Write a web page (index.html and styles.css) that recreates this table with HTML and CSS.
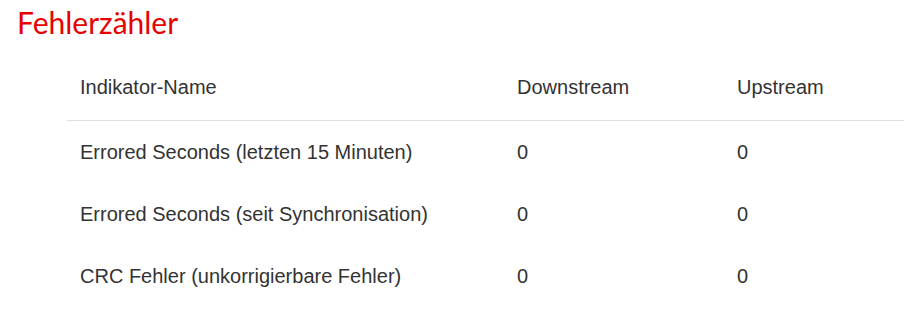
FILE: index.html
```html
<!DOCTYPE html>
<html lang="de">
<head>
<meta charset="utf-8">
<title>Fehlerzähler</title>
<link rel="stylesheet" href="styles.css">
</head>
<body>
<section class="panel">
  <h2 class="panel-title">Fehlerzähler</h2>
  <table class="counter-table">
    <thead>
      <tr>
        <th class="col-name">Indikator-Name</th>
        <th class="col-down">Downstream</th>
        <th class="col-up">Upstream</th>
      </tr>
    </thead>
    <tbody>
      <tr>
        <td>Errored Seconds (letzten 15 Minuten)</td>
        <td>0</td>
        <td>0</td>
      </tr>
      <tr>
        <td>Errored Seconds (seit Synchronisation)</td>
        <td>0</td>
        <td>0</td>
      </tr>
      <tr>
        <td>CRC Fehler (unkorrigierbare Fehler)</td>
        <td>0</td>
        <td>0</td>
      </tr>
    </tbody>
  </table>
</section>
</body>
</html>
```

FILE: styles.css
```css
html, body {
  margin: 0;
  padding: 0;
  background: #ffffff;
}

.panel {
  width: 912px;
}

.panel-title {
  margin: 0;
  padding: 2px 0 0 17px;
  height: 55px;
  box-sizing: border-box;
  font-family: "Lato", "Open Sans", sans-serif;
  font-weight: 400;
  font-size: 30px;
  line-height: 40px;
  color: #e60000;
}

.counter-table {
  margin-left: 67px;
  margin-top: 2px;
  width: 837px;
  border-collapse: collapse;
  font-family: "Liberation Sans", Arial, sans-serif;
  font-size: 20px;
  line-height: 30px;
  color: #333333;
}

.counter-table th,
.counter-table td {
  text-align: left;
  font-weight: 400;
  padding: 16px 13px 15px;
  border-bottom: 1px solid transparent;
}

.counter-table th {
  padding: 15px 13px 18px;
  border-bottom: 1px solid #e0e0e0;
}

.col-name { width: 411px; }
.col-down { width: 194px; }
.col-up { width: auto; }
```
